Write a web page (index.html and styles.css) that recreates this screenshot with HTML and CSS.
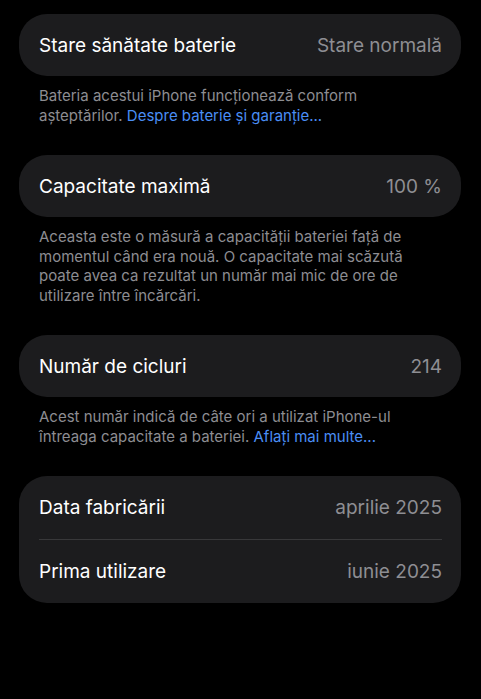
FILE: index.html
```html
<!DOCTYPE html>
<html>
  <head>
    <meta charset="utf-8">
    <link rel="stylesheet" href="styles.css">
  </head>
  <body>
    <div class="page">

      <div class="group">
        <div class="row">
          <span class="label">Stare sănătate baterie</span>
          <span class="value">Stare normală</span>
        </div>
      </div>
      <p class="note">Bateria acestui iPhone funcționează conform așteptărilor. <a href="#">Despre baterie și garanție...</a></p>

      <div class="group">
        <div class="row">
          <span class="label">Capacitate maximă</span>
          <span class="value">100 %</span>
        </div>
      </div>
      <p class="note">Aceasta este o măsură a capacității bateriei față de momentul când era nouă. O capacitate mai scăzută poate avea ca rezultat un număr mai mic de ore de utilizare între încărcări.</p>

      <div class="group">
        <div class="row">
          <span class="label">Număr de cicluri</span>
          <span class="value">214</span>
        </div>
      </div>
      <p class="note">Acest număr indică de câte ori a utilizat iPhone-ul întreaga capacitate a bateriei. <a href="#">Aflați mai multe...</a></p>

      <div class="group">
        <div class="row">
          <span class="label">Data fabricării</span>
          <span class="value">aprilie 2025</span>
        </div>
        <div class="row">
          <span class="label">Prima utilizare</span>
          <span class="value">iunie 2025</span>
        </div>
      </div>

    </div>
  </body>
</html>
```

FILE: styles.css
```css
html, body {
  margin: 0;
  background-color: #000;
  height: 100%;
}

.page {
  padding: 14px 20px 0 19px;
  font-family: Inter, "Noto Sans", "Liberation Sans", sans-serif;
}

.group {
  background-color: #1c1c1e;
  border-radius: 28px;
  padding: 0 19px 0 20px;
}

.row {
  display: flex;
  justify-content: space-between;
  align-items: center;
  height: 62px;
  font-size: 19px;
}

/* rows inside a multi-row card are a little taller */
.row + .row {
  border-top: 1px solid #38383a;
  height: 63px;
}

.row:has(+ .row) {
  height: 63px;
}

.label {
  color: #fff;
}

.value {
  color: #8e8e93;
}

.note {
  margin: 10px 0 30px 20px;
  max-width: 374px;
  color: #8d8d92;
  font-size: 15px;
  line-height: 19.5px;
}

.note a {
  color: #4a8ef5;
  text-decoration: none;
}
```
